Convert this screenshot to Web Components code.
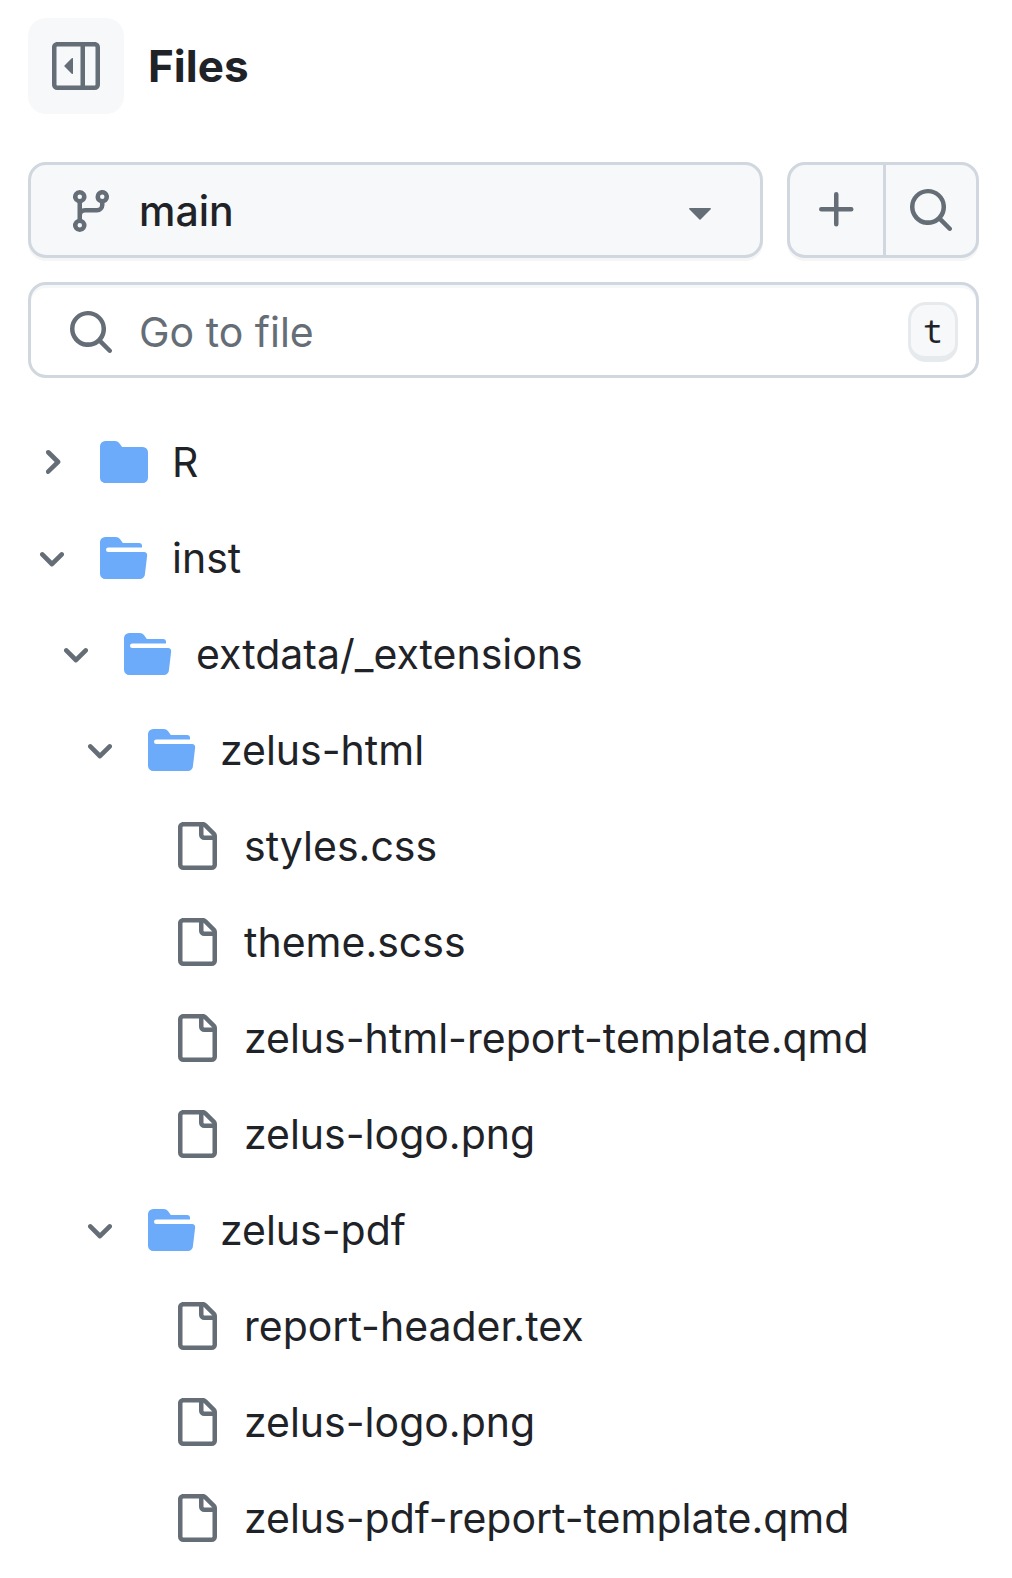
<!DOCTYPE html>
<html lang="en">
<head>
<meta charset="utf-8">
<meta name="viewport" content="width=device-width, initial-scale=1">
<title>Files</title>
<style>
  :root {
    --fg: #1f2328;
    --muted: #656d76;
    --border: #d0d7de;
    --subtle: #f6f8fa;
    --folder: #6cabf9;
  }
  body {
    margin: 0;
    background: #fff;
    color: var(--fg);
    font: 400 41px/60px Inter, "Liberation Sans", sans-serif;
  }
</style>
</head>
<body>
<files-panel>
  <tree-item kind="closed" label="R"></tree-item>
  <tree-item kind="open" label="inst">
    <tree-item kind="open" label="extdata/_extensions">
      <tree-item kind="open" label="zelus-html">
        <tree-item kind="file" label="styles.css"></tree-item>
        <tree-item kind="file" label="theme.scss"></tree-item>
        <tree-item kind="file" label="zelus-html-report-template.qmd"></tree-item>
        <tree-item kind="file" label="zelus-logo.png"></tree-item>
      </tree-item>
      <tree-item kind="open" label="zelus-pdf">
        <tree-item kind="file" label="report-header.tex"></tree-item>
        <tree-item kind="file" label="zelus-logo.png"></tree-item>
        <tree-item kind="file" label="zelus-pdf-report-template.qmd"></tree-item>
      </tree-item>
    </tree-item>
  </tree-item>
</files-panel>

<script>
const ICONS = {
  sidebar: [16, 'm4.177 7.823 2.396-2.396A.25.25 0 0 1 7 5.604v4.792a.25.25 0 0 1-.427.177L4.177 8.177a.25.25 0 0 1 0-.354ZM0 1.75C0 .784.784 0 1.75 0h12.5C15.216 0 16 .784 16 1.75v12.5A1.75 1.75 0 0 1 14.25 16H1.75A1.75 1.75 0 0 1 0 14.25Zm1.75-.25a.25.25 0 0 0-.25.25v12.5c0 .138.112.25.25.25H9.5v-13Zm12.5 13a.25.25 0 0 0 .25-.25V1.75a.25.25 0 0 0-.25-.25H11v13Z'],
  branch: [16, 'M9.5 3.25a2.25 2.25 0 1 1 3 2.122V6A2.5 2.5 0 0 1 10 8.5H6a1 1 0 0 0-1 1v1.128a2.251 2.251 0 1 1-1.5 0V5.372a2.25 2.25 0 1 1 1.5 0v1.836A2.493 2.493 0 0 1 6 7h4a1 1 0 0 0 1-1v-.628A2.25 2.25 0 0 1 9.5 3.25Zm-6 0a.75.75 0 1 0 1.5 0 .75.75 0 0 0-1.5 0Zm8.25-.75a.75.75 0 1 0 0 1.5.75.75 0 0 0 0-1.5ZM4.25 12a.75.75 0 1 0 0 1.5.75.75 0 0 0 0-1.5Z'],
  caret: [16, 'm4.427 7.427 3.396 3.396a.25.25 0 0 0 .354 0l3.396-3.396A.25.25 0 0 0 11.396 7H4.604a.25.25 0 0 0-.177.427Z'],
  plus: [16, 'M7.75 2a.75.75 0 0 1 .75.75V7h4.25a.75.75 0 0 1 0 1.5H8.5v4.25a.75.75 0 0 1-1.5 0V8.5H2.75a.75.75 0 0 1 0-1.5H7V2.75A.75.75 0 0 1 7.75 2Z'],
  search: [16, 'M10.68 11.74a6 6 0 0 1-7.922-8.982 6 6 0 0 1 8.982 7.922l3.04 3.04a.749.749 0 0 1-.326 1.275.749.749 0 0 1-.734-.215ZM11.5 7a4.499 4.499 0 1 0-8.997 0A4.499 4.499 0 0 0 11.5 7Z'],
  closed: [16, 'M1.75 1A1.75 1.75 0 0 0 0 2.75v10.5C0 14.216.784 15 1.75 15h12.5A1.75 1.75 0 0 0 16 13.25v-8.5A1.75 1.75 0 0 0 14.25 3H7.5a.25.25 0 0 1-.2-.1l-.9-1.2C6.07 1.26 5.55 1 5 1H1.75Z'],
  open: [16, 'M.513 1.513A1.75 1.75 0 0 1 1.75 1h3.5c.55 0 1.07.26 1.4.7l.9 1.2a.25.25 0 0 0 .2.1H13a1 1 0 0 1 1 1v.5H2.75a.75.75 0 0 0 0 1.5h11.978a1 1 0 0 1 .994 1.117L15 13.25A1.75 1.75 0 0 1 13.25 15H1.75A1.75 1.75 0 0 1 0 13.25V2.75c0-.464.184-.91.513-1.237Z'],
  file: [16, 'M2 1.75C2 .784 2.784 0 3.75 0h6.586c.464 0 .909.184 1.237.513l2.914 2.914c.329.328.513.773.513 1.237v9.586A1.75 1.75 0 0 1 13.25 16h-9.5A1.75 1.75 0 0 1 2 14.25Zm1.75-.25a.25.25 0 0 0-.25.25v12.5c0 .138.112.25.25.25h9.5a.25.25 0 0 0 .25-.25V6h-2.75A1.75 1.75 0 0 1 9 4.25V1.5Zm6.75.062V4.25c0 .138.112.25.25.25h2.688l-.011-.013-2.914-2.914-.013-.011Z'],
  right: [12, 'M4.7 10c-.2 0-.4-.1-.5-.2-.3-.3-.3-.8 0-1.1L6.9 6 4.2 3.3c-.3-.3-.3-.8 0-1.1.3-.3.8-.3 1.1 0l3.3 3.2c.3.3.3.8 0 1.1L5.3 9.7c-.2.2-.4.3-.6.3Z'],
  down: [12, 'M6 8.825c-.2 0-.4-.1-.5-.2l-3.3-3.3c-.3-.3-.3-.8 0-1.1.3-.3.8-.3 1.1 0l2.7 2.7 2.7-2.7c.3-.3.8-.3 1.1 0 .3.3.3.8 0 1.1l-3.2 3.2c-.2.2-.4.3-.6.3Z']
};

customElements.define('oct-icon', class extends HTMLElement {
  connectedCallback() {
    if (this.shadowRoot) return;
    const [box, d] = ICONS[this.getAttribute('name')];
    const size = box * 3;
    this.attachShadow({ mode: 'open' }).innerHTML = `
      <style>
        :host { display: block; flex: none; color: var(--muted); }
        svg { display: block; fill: currentColor; }
      </style>
      <svg width="${size}" height="${size}" viewBox="0 0 ${box} ${box}" aria-hidden="true"><path d="${d}"/></svg>`;
  }
});

customElements.define('tree-item', class extends HTMLElement {
  connectedCallback() {
    if (this.shadowRoot) return;
    const kind = this.getAttribute('kind');
    const label = this.getAttribute('label');
    const isFile = kind === 'file';
    const chevron = isFile ? '' : `<oct-icon name="${kind === 'open' ? 'down' : 'right'}"></oct-icon>`;
    const inner = `<span class="toggle">${chevron}</span><oct-icon class="${kind}" name="${kind}"></oct-icon><span class="label">${label}</span>`;
    this.setAttribute('role', 'treeitem');
    this.attachShadow({ mode: 'open' }).innerHTML = `
      <style>
        :host { display: block; }
        .row {
          display: flex; align-items: center; box-sizing: border-box;
          width: 100%; height: 96px; margin: 0; padding: 0; border: 0;
          background: none; color: var(--fg); font: inherit;
          text-align: left; text-decoration: none; white-space: nowrap; cursor: pointer;
        }
        .toggle { flex: none; width: 36px; margin-right: 30px; }
        .label { margin-left: 24px; }
        .open, .closed { color: var(--folder); }
        .group { padding-left: 24px; }
      </style>
      ${isFile ? `<a class="row" href="#${label}">${inner}</a>`
               : `<button class="row" type="button" aria-expanded="${kind === 'open'}">${inner}</button>`}
      ${kind === 'open' ? '<div class="group" role="group"><slot></slot></div>' : ''}`;
  }
});

customElements.define('branch-button', class extends HTMLElement {
  connectedCallback() {
    if (this.shadowRoot) return;
    this.attachShadow({ mode: 'open' }).innerHTML = `
      <style>
        :host { display: block; flex: 1; min-width: 0; }
        button {
          display: flex; align-items: center; gap: 24px; box-sizing: border-box;
          width: 100%; height: 96px; padding: 2px 36px 0;
          border: 3px solid var(--border); border-radius: 18px;
          background: var(--subtle); color: var(--fg); font: inherit; font-weight: 500;
          text-align: left; box-shadow: 0 3px 0 rgba(31, 35, 40, .04); cursor: pointer;
        }
        span { flex: 1; }
      </style>
      <button type="button" aria-haspopup="true">
        <oct-icon name="branch"></oct-icon>
        <span><slot></slot></span>
        <oct-icon name="caret"></oct-icon>
      </button>`;
  }
});

customElements.define('action-group', class extends HTMLElement {
  connectedCallback() {
    if (this.shadowRoot) return;
    this.attachShadow({ mode: 'open' }).innerHTML = `
      <style>
        :host {
          display: grid; grid-template-columns: 1fr 1fr; flex: none;
          box-sizing: border-box; width: 192px; height: 96px;
          border: 3px solid var(--border); border-radius: 18px; overflow: hidden;
          background: var(--subtle); box-shadow: 0 3px 0 rgba(31, 35, 40, .04);
        }
        button {
          display: flex; align-items: center; justify-content: center;
          padding: 0; border: 0; background: none; cursor: pointer;
        }
        button + button { border-left: 3px solid var(--border); }
      </style>
      <button type="button" aria-label="Add file"><oct-icon name="plus"></oct-icon></button>
      <button type="button" aria-label="Search this repository"><oct-icon name="search"></oct-icon></button>`;
  }
});

customElements.define('file-search', class extends HTMLElement {
  connectedCallback() {
    if (this.shadowRoot) return;
    this.attachShadow({ mode: 'open' }).innerHTML = `
      <style>
        :host { display: block; }
        label {
          display: flex; align-items: center; gap: 24px; box-sizing: border-box;
          height: 96px; padding: 3px 18px 0 36px;
          border: 3px solid var(--border); border-radius: 18px;
          box-shadow: inset 0 3px 0 rgba(208, 215, 222, .2);
        }
        input {
          flex: 1; min-width: 0; padding: 0; border: 0; outline: 0;
          background: none; color: var(--fg); font: inherit;
        }
        input::placeholder { color: var(--muted); opacity: 1; }
        kbd {
          box-sizing: border-box; width: 50px; height: 60px;
          border: 3px solid #e7eaed; border-bottom-width: 6px; border-radius: 18px;
          background: var(--subtle); text-align: center;
          font: 33px/51px "Noto Sans Mono", "DejaVu Sans Mono", monospace;
        }
      </style>
      <label>
        <oct-icon name="search"></oct-icon>
        <input type="text" placeholder="Go to file" aria-label="Go to file">
        <kbd>t</kbd>
      </label>`;
  }
});

customElements.define('files-panel', class extends HTMLElement {
  connectedCallback() {
    if (this.shadowRoot) return;
    this.attachShadow({ mode: 'open' }).innerHTML = `
      <style>
        :host { display: block; padding: 18px 33px 12px 28px; }
        header { display: flex; align-items: center; gap: 24px; margin-bottom: 48px; }
        .collapse {
          display: flex; align-items: center; justify-content: center;
          width: 96px; height: 96px; padding: 0; border: 0; border-radius: 18px;
          background: var(--subtle); cursor: pointer;
        }
        h2 { margin: 0; font-size: 44px; line-height: 72px; font-weight: 700; }
        .bar { display: flex; gap: 24px; margin-bottom: 24px; }
        .tree { margin-top: 36px; padding-left: 6px; }
      </style>
      <header>
        <button class="collapse" type="button" aria-label="Collapse file tree"><oct-icon name="sidebar"></oct-icon></button>
        <h2>Files</h2>
      </header>
      <div class="bar">
        <branch-button>main</branch-button>
        <action-group></action-group>
      </div>
      <file-search></file-search>
      <nav class="tree" role="tree" aria-label="Files"><slot></slot></nav>`;
  }
});
</script>
</body>
</html>
